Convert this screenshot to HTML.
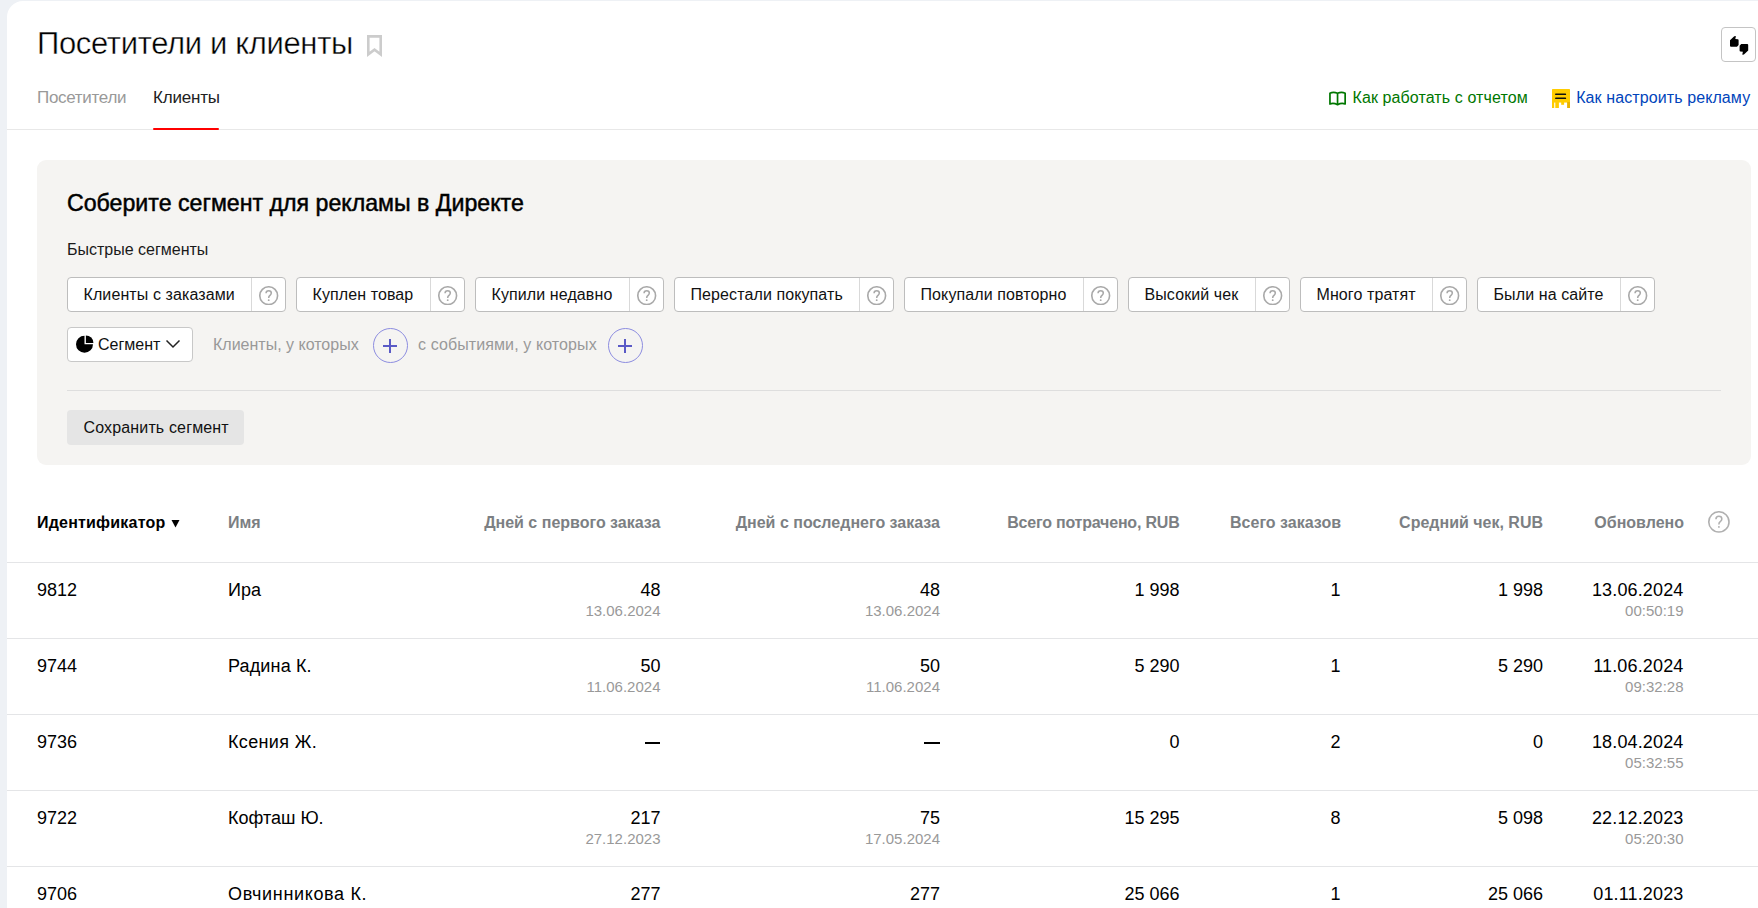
<!DOCTYPE html>
<html><head><meta charset="utf-8">
<style>
*{box-sizing:border-box;margin:0;padding:0}
html,body{width:1758px;height:908px;overflow:hidden;background:#eef1f5;font-family:"Liberation Sans",sans-serif;color:#000}
.a{position:absolute;white-space:pre;line-height:1}
#card{position:absolute;left:7px;top:1px;width:1780px;height:1000px;background:#fff;border-top-left-radius:16px}
.hl{position:absolute;height:1px;background:#e4e5e7}
.panel{position:absolute;left:37px;top:160px;width:1714px;height:305px;background:#f5f4f2;border-radius:9px}
.chip{position:absolute;top:277px;height:35px;background:#fff;border:1px solid #bdbdbd;border-radius:4px}
.chip .dv{position:absolute;top:0;bottom:0;width:1px;background:#d9d9d9}
.chip .tx{position:absolute;top:9px;font-size:16px;line-height:16px;color:#111;white-space:pre;letter-spacing:0.1px}
</style></head>
<body>
<div id="card"></div>
<div class="a " style="top:27.6px;font-size:31px;letter-spacing:-0.35px;left:37.0px;-webkit-text-stroke:0.4px #fff">Посетители и клиенты</div>
<svg class="a" style="left:366px;top:34px" width="18" height="24" viewBox="0 0 18 24"><path d="M2.3 2.4H14.7V20.4L8.5 15.6L2.3 20.4Z" fill="none" stroke="#cccccc" stroke-width="2.6" stroke-linejoin="miter"/></svg>
<div class="a" style="left:1721px;top:27px;width:35px;height:35px;border:1px solid #c4c4c4;border-radius:4px;background:#fff"></div>
<svg class="a" style="left:1728px;top:34px" width="22" height="22" viewBox="0 0 22 22"><path d="M2 6.2L6 2.4Q7 1.6 7.9 2.3L7.3 4.9L9.8 5.2Q10.6 5.4 10.6 6.2L10.6 11L9 12.7L3 12.7Q2 12.7 2 11.7Z" fill="#000"/><path transform="rotate(180 11.1 11.35)" d="M2 6.2L6 2.4Q7 1.6 7.9 2.3L7.3 4.9L9.8 5.2Q10.6 5.4 10.6 6.2L10.6 11L9 12.7L3 12.7Q2 12.7 2 11.7Z" fill="#000"/></svg>
<div class="a " style="top:88.9px;font-size:17px;letter-spacing:-0.3px;left:37.0px;color:#999999">Посетители</div>
<div class="a " style="top:88.9px;font-size:17px;letter-spacing:-0.2px;left:153.0px;color:#222">Клиенты</div>
<div class="hl" style="left:7px;top:129px;width:1751px;background:#e8e8e8"></div>
<div class="a" style="left:153px;top:128px;width:66px;height:2px;background:#f00;border-radius:1px"></div>
<svg class="a" style="left:1328px;top:90px" width="19" height="16" viewBox="0 0 19 16"><path d="M1.95 3.2Q5.5 1.3 9.55 3.3Q13.5 1.3 17.15 3.2V14Q13.5 12.6 9.55 14.7Q5.5 12.6 1.95 14Z M9.55 3.3V14.7" fill="none" stroke="#007700" stroke-width="1.7" stroke-linejoin="round"/></svg>
<div class="a " style="top:89.5px;font-size:16px;letter-spacing:0.1px;left:1352.5px;color:#007700">Как работать с отчетом</div>
<svg class="a" style="left:1552px;top:89px" width="18" height="19" viewBox="0 0 18 19"><path d="M0.6 0H17.4Q18 0 18 0.6V13.2H0V0.6Q0 0 0.6 0Z" fill="#fc0"/><rect x="0" y="12" width="18" height="1.4" fill="#fc0"/><rect x="0" y="13" width="2.2" height="6" fill="#fc0"/><rect x="3.3" y="13" width="3.6" height="6" fill="#fc0"/><rect x="9.2" y="13" width="2.9" height="2.8" fill="#fc0"/><rect x="15.1" y="13" width="2.9" height="6" fill="#e9b300"/><rect x="3.1" y="4.5" width="11" height="1.5" rx="0.6" fill="#111"/><rect x="3.1" y="8.6" width="11" height="1.5" rx="0.6" fill="#111"/></svg>
<div class="a " style="top:89.5px;font-size:16px;letter-spacing:0.1px;left:1576.2px;color:#0044bb">Как настроить рекламу</div>
<div class="panel"></div>
<div class="a " style="top:190.9px;font-size:24px;left:67.0px;-webkit-text-stroke:0.5px #000;transform:scaleX(0.965);transform-origin:0 0">Соберите сегмент для рекламы в Директе</div>
<div class="a " style="top:241.9px;font-size:16px;left:67.0px;color:#1a1a1a">Быстрые сегменты</div>
<div class="chip" style="left:67px;width:219px"><div class="tx" style="left:15.5px">Клиенты с заказами</div><div class="dv" style="left:183px"></div><svg class="a" style="left:191.2px;top:7.6px" width="19.4" height="19.4" viewBox="0 0 20 20"><circle cx="10" cy="10" r="9.18" fill="none" stroke="#a9a9a9" stroke-width="1.65"/><path d="M7.3 7.5C7.3 5.6 8.6 4.9 10 4.9C11.6 4.9 12.7 5.9 12.7 7.3C12.7 8.6 11.8 9.3 11 10C10.3 10.6 10 11.2 10 12.3" fill="none" stroke="#a9a9a9" stroke-width="1.60"/><circle cx="10" cy="14.6" r="0.98" fill="#a9a9a9"/></svg></div>
<div class="chip" style="left:296px;width:169px"><div class="tx" style="left:15.5px">Куплен товар</div><div class="dv" style="left:133px"></div><svg class="a" style="left:141.2px;top:7.6px" width="19.4" height="19.4" viewBox="0 0 20 20"><circle cx="10" cy="10" r="9.18" fill="none" stroke="#a9a9a9" stroke-width="1.65"/><path d="M7.3 7.5C7.3 5.6 8.6 4.9 10 4.9C11.6 4.9 12.7 5.9 12.7 7.3C12.7 8.6 11.8 9.3 11 10C10.3 10.6 10 11.2 10 12.3" fill="none" stroke="#a9a9a9" stroke-width="1.60"/><circle cx="10" cy="14.6" r="0.98" fill="#a9a9a9"/></svg></div>
<div class="chip" style="left:475px;width:189px"><div class="tx" style="left:15.5px">Купили недавно</div><div class="dv" style="left:153px"></div><svg class="a" style="left:161.2px;top:7.6px" width="19.4" height="19.4" viewBox="0 0 20 20"><circle cx="10" cy="10" r="9.18" fill="none" stroke="#a9a9a9" stroke-width="1.65"/><path d="M7.3 7.5C7.3 5.6 8.6 4.9 10 4.9C11.6 4.9 12.7 5.9 12.7 7.3C12.7 8.6 11.8 9.3 11 10C10.3 10.6 10 11.2 10 12.3" fill="none" stroke="#a9a9a9" stroke-width="1.60"/><circle cx="10" cy="14.6" r="0.98" fill="#a9a9a9"/></svg></div>
<div class="chip" style="left:674px;width:220px"><div class="tx" style="left:15.5px">Перестали покупать</div><div class="dv" style="left:184px"></div><svg class="a" style="left:192.2px;top:7.6px" width="19.4" height="19.4" viewBox="0 0 20 20"><circle cx="10" cy="10" r="9.18" fill="none" stroke="#a9a9a9" stroke-width="1.65"/><path d="M7.3 7.5C7.3 5.6 8.6 4.9 10 4.9C11.6 4.9 12.7 5.9 12.7 7.3C12.7 8.6 11.8 9.3 11 10C10.3 10.6 10 11.2 10 12.3" fill="none" stroke="#a9a9a9" stroke-width="1.60"/><circle cx="10" cy="14.6" r="0.98" fill="#a9a9a9"/></svg></div>
<div class="chip" style="left:904px;width:214px"><div class="tx" style="left:15.5px">Покупали повторно</div><div class="dv" style="left:178px"></div><svg class="a" style="left:186.2px;top:7.6px" width="19.4" height="19.4" viewBox="0 0 20 20"><circle cx="10" cy="10" r="9.18" fill="none" stroke="#a9a9a9" stroke-width="1.65"/><path d="M7.3 7.5C7.3 5.6 8.6 4.9 10 4.9C11.6 4.9 12.7 5.9 12.7 7.3C12.7 8.6 11.8 9.3 11 10C10.3 10.6 10 11.2 10 12.3" fill="none" stroke="#a9a9a9" stroke-width="1.60"/><circle cx="10" cy="14.6" r="0.98" fill="#a9a9a9"/></svg></div>
<div class="chip" style="left:1128px;width:162px"><div class="tx" style="left:15.5px">Высокий чек</div><div class="dv" style="left:126px"></div><svg class="a" style="left:134.2px;top:7.6px" width="19.4" height="19.4" viewBox="0 0 20 20"><circle cx="10" cy="10" r="9.18" fill="none" stroke="#a9a9a9" stroke-width="1.65"/><path d="M7.3 7.5C7.3 5.6 8.6 4.9 10 4.9C11.6 4.9 12.7 5.9 12.7 7.3C12.7 8.6 11.8 9.3 11 10C10.3 10.6 10 11.2 10 12.3" fill="none" stroke="#a9a9a9" stroke-width="1.60"/><circle cx="10" cy="14.6" r="0.98" fill="#a9a9a9"/></svg></div>
<div class="chip" style="left:1300px;width:167px"><div class="tx" style="left:15.5px">Много тратят</div><div class="dv" style="left:131px"></div><svg class="a" style="left:139.2px;top:7.6px" width="19.4" height="19.4" viewBox="0 0 20 20"><circle cx="10" cy="10" r="9.18" fill="none" stroke="#a9a9a9" stroke-width="1.65"/><path d="M7.3 7.5C7.3 5.6 8.6 4.9 10 4.9C11.6 4.9 12.7 5.9 12.7 7.3C12.7 8.6 11.8 9.3 11 10C10.3 10.6 10 11.2 10 12.3" fill="none" stroke="#a9a9a9" stroke-width="1.60"/><circle cx="10" cy="14.6" r="0.98" fill="#a9a9a9"/></svg></div>
<div class="chip" style="left:1477px;width:178px"><div class="tx" style="left:15.5px">Были на сайте</div><div class="dv" style="left:142px"></div><svg class="a" style="left:150.2px;top:7.6px" width="19.4" height="19.4" viewBox="0 0 20 20"><circle cx="10" cy="10" r="9.18" fill="none" stroke="#a9a9a9" stroke-width="1.65"/><path d="M7.3 7.5C7.3 5.6 8.6 4.9 10 4.9C11.6 4.9 12.7 5.9 12.7 7.3C12.7 8.6 11.8 9.3 11 10C10.3 10.6 10 11.2 10 12.3" fill="none" stroke="#a9a9a9" stroke-width="1.60"/><circle cx="10" cy="14.6" r="0.98" fill="#a9a9a9"/></svg></div>
<div class="a" style="left:67px;top:327px;width:126px;height:35px;background:#fff;border:1px solid #c8c8c8;border-radius:4px"></div>
<svg class="a" style="left:76px;top:335px" width="19" height="19" viewBox="0 0 19 19"><path d="M8.5 9.3V0.8A8.5 8.5 0 1 0 17 9.3Z" fill="#000"/><path d="M9.9 7.9H17.4A7.5 7.5 0 0 0 9.9 0.4Z" fill="#000"/></svg>
<div class="a " style="top:336.5px;font-size:16px;left:98.0px;color:#111">Сегмент</div>
<svg class="a" style="left:165px;top:339px" width="16" height="10" viewBox="0 0 16 10"><path d="M1.5 1.5L8 8L14.5 1.5" fill="none" stroke="#222" stroke-width="1.5"/></svg>
<div class="a " style="top:336.5px;font-size:16px;left:213.0px;color:#999999">Клиенты, у которых</div>
<div class="a" style="left:373.0px;top:327.8px;width:35px;height:35px;border:1px solid #8d8de0;border-radius:50%"></div>
<div class="a" style="left:382.9px;top:344.9px;width:14px;height:2px;background:#5a5ac6"></div>
<div class="a" style="left:388.9px;top:338.9px;width:2px;height:14px;background:#5a5ac6"></div>
<div class="a" style="left:608.2px;top:327.8px;width:35px;height:35px;border:1px solid #8d8de0;border-radius:50%"></div>
<div class="a" style="left:618.1px;top:344.9px;width:14px;height:2px;background:#5a5ac6"></div>
<div class="a" style="left:624.1px;top:338.9px;width:2px;height:14px;background:#5a5ac6"></div>
<div class="a " style="top:336.5px;font-size:16px;letter-spacing:0.1px;left:418.0px;color:#999999">с событиями, у которых</div>
<div class="hl" style="left:67px;top:390px;width:1654px;background:#dedede"></div>
<div class="a" style="left:67px;top:410px;width:177px;height:35px;background:#e5e5e5;border-radius:4px"></div>
<div class="a " style="top:420.2px;font-size:16px;letter-spacing:0.15px;left:83.5px;color:#111">Сохранить сегмент</div>
<div class="a " style="top:514.5px;font-size:16px;letter-spacing:0.2px;left:37.0px;font-weight:700;color:#000">Идентификатор</div>
<svg class="a" style="left:171px;top:519px" width="9" height="9" viewBox="0 0 9 9"><path d="M0.5 1H8.5L4.5 8.5Z" fill="#000"/></svg>
<div class="a " style="top:514.5px;font-size:16px;left:228.0px;font-weight:700;color:#7c7f83">Имя</div>
<div class="a " style="top:514.5px;font-size:16px;right:1097.5px;font-weight:700;color:#7c7f83">Дней с первого заказа</div>
<div class="a " style="top:514.5px;font-size:16px;right:818.0px;font-weight:700;color:#7c7f83">Дней с последнего заказа</div>
<div class="a " style="top:514.5px;font-size:16px;letter-spacing:-0.2px;right:578.5px;font-weight:700;color:#7c7f83">Всего потрачено, RUB</div>
<div class="a " style="top:514.5px;font-size:16px;right:417.0px;font-weight:700;color:#7c7f83">Всего заказов</div>
<div class="a " style="top:514.5px;font-size:16px;right:215.0px;font-weight:700;color:#7c7f83">Средний чек, RUB</div>
<div class="a " style="top:514.5px;font-size:16px;right:74.0px;font-weight:700;color:#7c7f83">Обновлено</div>
<svg class="a" style="left:1708.1px;top:511.0px" width="21.8" height="21.8" viewBox="0 0 20 20"><circle cx="10" cy="10" r="9.27" fill="none" stroke="#b0b0b0" stroke-width="1.47"/><path d="M7.3 7.5C7.3 5.6 8.6 4.9 10 4.9C11.6 4.9 12.7 5.9 12.7 7.3C12.7 8.6 11.8 9.3 11 10C10.3 10.6 10 11.2 10 12.3" fill="none" stroke="#b0b0b0" stroke-width="1.42"/><circle cx="10" cy="14.6" r="0.87" fill="#b0b0b0"/></svg>
<div class="hl" style="left:7px;top:562px;width:1751px"></div>
<div class="a " style="top:580.8px;font-size:18px;left:37.0px;">9812</div>
<div class="a " style="top:580.8px;font-size:18px;left:228.0px;">Ира</div>
<div class="a " style="top:580.8px;font-size:18px;right:1097.5px;">48</div>
<div class="a " style="top:603.3px;font-size:15px;right:1097.5px;color:#999999">13.06.2024</div>
<div class="a " style="top:580.8px;font-size:18px;right:818.0px;">48</div>
<div class="a " style="top:603.3px;font-size:15px;right:818.0px;color:#999999">13.06.2024</div>
<div class="a " style="top:580.8px;font-size:18px;letter-spacing:0.15px;right:74.5px;">13.06.2024</div>
<div class="a " style="top:603.3px;font-size:15px;right:74.5px;color:#999999">00:50:19</div>
<div class="a " style="top:580.8px;font-size:18px;right:578.5px;">1 998</div>
<div class="a " style="top:580.8px;font-size:18px;right:417.5px;">1</div>
<div class="a " style="top:580.8px;font-size:18px;right:215.0px;">1 998</div>
<div class="hl" style="left:7px;top:638px;width:1751px"></div>
<div class="a " style="top:656.8px;font-size:18px;left:37.0px;">9744</div>
<div class="a " style="top:656.8px;font-size:18px;letter-spacing:0.15px;left:228.0px;">Радина К.</div>
<div class="a " style="top:656.8px;font-size:18px;right:1097.5px;">50</div>
<div class="a " style="top:679.3px;font-size:15px;right:1097.5px;color:#999999">11.06.2024</div>
<div class="a " style="top:656.8px;font-size:18px;right:818.0px;">50</div>
<div class="a " style="top:679.3px;font-size:15px;right:818.0px;color:#999999">11.06.2024</div>
<div class="a " style="top:656.8px;font-size:18px;letter-spacing:0.15px;right:74.5px;">11.06.2024</div>
<div class="a " style="top:679.3px;font-size:15px;right:74.5px;color:#999999">09:32:28</div>
<div class="a " style="top:656.8px;font-size:18px;right:578.5px;">5 290</div>
<div class="a " style="top:656.8px;font-size:18px;right:417.5px;">1</div>
<div class="a " style="top:656.8px;font-size:18px;right:215.0px;">5 290</div>
<div class="hl" style="left:7px;top:714px;width:1751px"></div>
<div class="a " style="top:732.8px;font-size:18px;left:37.0px;">9736</div>
<div class="a " style="top:732.8px;font-size:18px;letter-spacing:0.35px;left:228.0px;">Ксения Ж.</div>
<div class="a" style="left:644.7px;top:742.1px;width:15.5px;height:2px;background:#000"></div>
<div class="a" style="left:924.2px;top:742.1px;width:15.5px;height:2px;background:#000"></div>
<div class="a " style="top:732.8px;font-size:18px;letter-spacing:0.15px;right:74.5px;">18.04.2024</div>
<div class="a " style="top:755.3px;font-size:15px;right:74.5px;color:#999999">05:32:55</div>
<div class="a " style="top:732.8px;font-size:18px;right:578.5px;">0</div>
<div class="a " style="top:732.8px;font-size:18px;right:417.5px;">2</div>
<div class="a " style="top:732.8px;font-size:18px;right:215.0px;">0</div>
<div class="hl" style="left:7px;top:790px;width:1751px"></div>
<div class="a " style="top:808.8px;font-size:18px;left:37.0px;">9722</div>
<div class="a " style="top:808.8px;font-size:18px;left:228.0px;">Кофташ Ю.</div>
<div class="a " style="top:808.8px;font-size:18px;right:1097.5px;">217</div>
<div class="a " style="top:831.3px;font-size:15px;right:1097.5px;color:#999999">27.12.2023</div>
<div class="a " style="top:808.8px;font-size:18px;right:818.0px;">75</div>
<div class="a " style="top:831.3px;font-size:15px;right:818.0px;color:#999999">17.05.2024</div>
<div class="a " style="top:808.8px;font-size:18px;letter-spacing:0.15px;right:74.5px;">22.12.2023</div>
<div class="a " style="top:831.3px;font-size:15px;right:74.5px;color:#999999">05:20:30</div>
<div class="a " style="top:808.8px;font-size:18px;right:578.5px;">15 295</div>
<div class="a " style="top:808.8px;font-size:18px;right:417.5px;">8</div>
<div class="a " style="top:808.8px;font-size:18px;right:215.0px;">5 098</div>
<div class="hl" style="left:7px;top:866px;width:1751px"></div>
<div class="a " style="top:884.8px;font-size:18px;left:37.0px;">9706</div>
<div class="a " style="top:884.8px;font-size:18px;letter-spacing:0.65px;left:228.0px;">Овчинникова К.</div>
<div class="a " style="top:884.8px;font-size:18px;right:1097.5px;">277</div>
<div class="a " style="top:884.8px;font-size:18px;right:818.0px;">277</div>
<div class="a " style="top:884.8px;font-size:18px;letter-spacing:0.15px;right:74.5px;">01.11.2023</div>
<div class="a " style="top:884.8px;font-size:18px;right:578.5px;">25 066</div>
<div class="a " style="top:884.8px;font-size:18px;right:417.5px;">1</div>
<div class="a " style="top:884.8px;font-size:18px;right:215.0px;">25 066</div>
</body></html>
